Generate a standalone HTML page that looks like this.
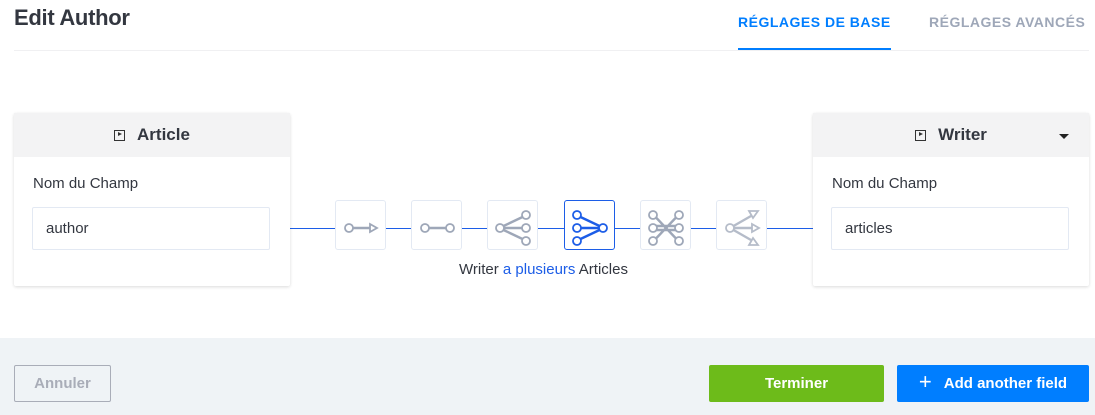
<!DOCTYPE html>
<html><head><meta charset="utf-8"><style>
*{box-sizing:border-box;margin:0;padding:0}
body{width:1095px;height:415px;background:#fff;font-family:"Liberation Sans",sans-serif;position:relative;overflow:hidden;color:#333740}
.abs{position:absolute}
h1{position:absolute;left:14px;top:5px;font-size:22px;font-weight:bold;color:#333740;letter-spacing:-0.3px}
.hr{position:absolute;left:14px;right:6px;top:50px;height:1px;background:#f0f0f2}
.tab{position:absolute;top:14px;font-size:14px;font-weight:bold;letter-spacing:0.5px}
.card{position:absolute;top:113px;width:276px;height:173px;background:#fff;border-radius:2px;box-shadow:0 1px 3px rgba(0,0,0,0.15)}
.ch{height:44px;background:#f3f3f4;display:flex;align-items:center;justify-content:center;font-size:17px;font-weight:bold;color:#333740}
.ico{display:inline-block;width:11px;height:11px;border:1.5px solid #333;margin-right:12px;position:relative}
.ico:after{content:"";position:absolute;left:2.5px;top:1.5px;border-left:4px solid #333;border-top:2.5px solid transparent;border-bottom:2.5px solid transparent}
.lbl{position:absolute;left:19px;top:62px;font-size:15px;color:#333740}
.inp{position:absolute;left:18px;top:94px;width:238px;height:43px;border:1px solid #e3e9f3;border-radius:2px;padding:12px 13px;font-size:15px;color:#333740}
.line{position:absolute;left:289px;width:524px;top:228px;height:1px;background:#1c5de7}
.rb{position:absolute;top:200px;width:51px;height:50px;background:#fff;border:1px solid #e3e9f3;border-radius:3px}
.rb svg{position:absolute;left:0;top:0}
.foot{position:absolute;left:0;top:338px;width:1095px;height:77px;background:#eff3f6}
.btn{position:absolute;top:365px;height:37px;border-radius:2px;font-size:15px;font-weight:bold;display:flex;align-items:center;justify-content:center}
</style></head><body>
<h1>Edit Author</h1>
<div class="hr"></div>
<div class="tab" style="left:738px;color:#007eff">RÉGLAGES DE BASE</div>
<div class="abs" style="left:738px;top:48px;width:153px;height:2px;background:#007eff"></div>
<div class="tab" style="left:929px;color:#9ea7b8">RÉGLAGES AVANCÉS</div>

<div class="line"></div>
<div class="card" style="left:14px"><div class="ch"><span class="ico"></span>Article</div>
<div class="lbl">Nom du Champ</div><div class="inp">author</div></div>
<div class="card" style="left:813px"><div class="ch"><span class="ico"></span>Writer<span style="position:absolute;right:20px;top:21px;border-top:5px solid #222;border-left:5px solid transparent;border-right:5px solid transparent"></span></div>
<div class="lbl">Nom du Champ</div><div class="inp">articles</div></div>

<div class="rb" style="left:335px"><svg width="51" height="50" fill="none" stroke="#9ea7b8" stroke-width="1.8"><circle cx="13" cy="27" r="4" fill="#fff"/><path d="M17 27H34" stroke-width="2.6"/><path d="M34 23L41 27L34 31Z"/></svg></div>
<div class="rb" style="left:411px"><svg width="51" height="50" fill="none" stroke="#9ea7b8" stroke-width="1.8"><circle cx="13" cy="27" r="4"/><circle cx="38" cy="27" r="4"/><path d="M17 27H34" stroke-width="2.6"/></svg></div>
<div class="rb" style="left:487px"><svg width="51" height="50" fill="none" stroke="#9ea7b8" stroke-width="1.8"><circle cx="12" cy="27" r="4"/><circle cx="38" cy="14" r="4"/><circle cx="38" cy="27" r="4"/><circle cx="38" cy="40" r="4"/><path d="M15.5 25L34.5 16M16 27H34M15.5 29L34.5 38" stroke-width="2.4"/></svg></div>
<div class="rb" style="left:564px;border-color:#1c5de7"><svg width="51" height="50" fill="none" stroke="#1c5de7" stroke-width="1.8"><circle cx="12" cy="14" r="4"/><circle cx="12" cy="27" r="4"/><circle cx="12" cy="40" r="4"/><circle cx="38" cy="27" r="4"/><path d="M15.5 16L34.5 25M16 27H34M15.5 38L34.5 29" stroke-width="2.4"/></svg></div>
<div class="rb" style="left:640px"><svg width="51" height="50" fill="none" stroke="#9ea7b8" stroke-width="1.8"><circle cx="12" cy="14" r="4"/><circle cx="12" cy="27" r="4"/><circle cx="12" cy="40" r="4"/><circle cx="38" cy="14" r="4"/><circle cx="38" cy="27" r="4"/><circle cx="38" cy="40" r="4"/><path d="M15 16.5L35 37.5M15 37.5L35 16.5M15 25L35 25M15 29L35 29" stroke-width="2.4"/></svg></div>
<div class="rb" style="left:716px"><svg width="51" height="50" fill="none" stroke="#b5bcc9" stroke-width="1.8"><circle cx="13" cy="27" r="4"/><path d="M16.5 25L34 15M17 27H35M16.5 29L34 39" stroke-width="2.4"/><path d="M32 10L41 10L36 17Z"/><path d="M35 23L42 27L35 31Z"/><path d="M32 44L41 44L36 37Z"/></svg></div>

<div class="abs" style="left:459px;top:261px;font-size:15px;color:#333740">Writer <span style="color:#1c5de7">a plusieurs</span> Articles</div>

<div class="foot"></div>
<div class="btn" style="left:14px;width:97px;border:1px solid #a9adb8;color:#a9adb8;background:transparent">Annuler</div>
<div class="btn" style="left:709px;width:175px;background:#6dbb1a;color:#fff">Terminer</div>
<div class="btn" style="left:897px;width:192px;background:#007eff;color:#fff"><span style="font-weight:300;font-size:22px;margin-right:12px;margin-top:-3px">+</span>Add another field</div>
</body></html>
